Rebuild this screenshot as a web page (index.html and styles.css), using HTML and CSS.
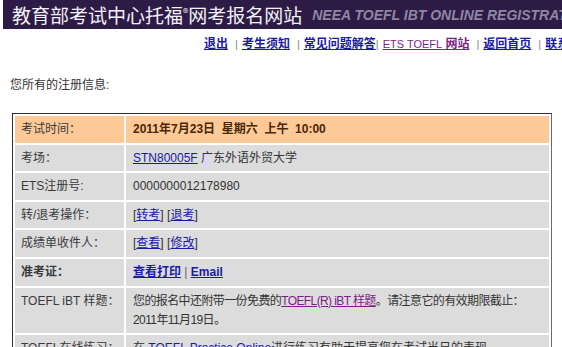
FILE: index.html
```html
<!DOCTYPE html>
<html lang="zh-CN">
<head>
    <meta charset="UTF-8">
    <title>教育部考试中心托福网考报名网站</title>
    <link rel="stylesheet" href="styles.css">
</head>
<body>
    <div class="banner">
        <span class="banner-title">教育部考试中心托福<sup>®</sup>网考报名网站</span>
        <span class="banner-sub">NEEA TOEFL IBT ONLINE REGISTRATION</span>
    </div>
    <div class="nav">
        <a href="#">退出</a><span class="sep">|</span><a href="#">考生须知</a><span class="sep">|</span><a href="#">常见问题解答</a><span class="sep tight">|</span><a href="#" class="visited"><span class="light">ETS TOEFL</span> 网站</a><span class="sep">|</span><a href="#">返回首页</a><span class="sep">|</span><a href="#">联系我们</a>
    </div>
    <p class="intro">您所有的注册信息:</p>
    <table class="info">
        <tr class="head">
            <td class="label">考试时间：</td>
            <td class="value">2011年7月23日&nbsp; 星期六&nbsp; 上午&nbsp; 10:00</td>
        </tr>
        <tr>
            <td class="label">考场：</td>
            <td class="value"><a href="#">STN80005F</a> 广东外语外贸大学</td>
        </tr>
        <tr>
            <td class="label">ETS注册号:</td>
            <td class="value">0000000012178980</td>
        </tr>
        <tr>
            <td class="label">转/退考操作：</td>
            <td class="value">[<a href="#">转考</a>] [<a href="#">退考</a>]</td>
        </tr>
        <tr>
            <td class="label">成绩单收件人：</td>
            <td class="value">[<a href="#">查看</a>] [<a href="#">修改</a>]</td>
        </tr>
        <tr>
            <td class="label strong">准考证：</td>
            <td class="value"><a href="#" class="strong">查看打印</a> <span class="pipe">|</span> <a href="#" class="strong">Email</a></td>
        </tr>
        <tr class="sample">
            <td class="label">TOEFL iBT 样题：</td>
            <td class="value">您的报名中还附带一份免费的<a href="#" class="visited">TOEFL(R) iBT 样题</a>。请注意它的有效期限截止：<br>2011年11月19日。</td>
        </tr>
        <tr>
            <td class="label">TOEFL在线练习：</td>
            <td class="value">在 <a href="#">TOEFL Practice Online</a>进行练习有助于提高您在考试当日的表现。</td>
        </tr>
    </table>
</body>
</html>
```

FILE: styles.css
```css
html, body {
    overflow: hidden;
}
body {
    margin: 0;
    font-family: "Liberation Sans", "Noto Sans CJK SC", sans-serif;
    font-size: 12px;
    color: #333;
    background-color: #fff;
}
a {
    color: #1a1aa8;
    text-decoration: underline;
}
a.visited {
    color: #7b1f86;
}
.banner {
    margin-left: 3px;
    height: 29px;
    padding-left: 9px;
    display: flex;
    align-items: center;
    white-space: nowrap;
    background-color: #2d1b46;
}
.banner-title {
    font-family: "Noto Sans CJK SC", sans-serif;
    font-size: 19px;
    line-height: 29px;
    color: #f4f2f8;
}
.banner-title sup {
    font-size: 11px;
    line-height: 0;
    vertical-align: 6px;
}
.banner-sub {
    margin-left: 10px;
    font: italic bold 14px "Liberation Sans", sans-serif;
    color: #8e86a3;
}
.nav {
    margin-top: 7px;
    padding-left: 204px;
    line-height: 16px;
    white-space: nowrap;
    font-weight: bold;
}
.nav .light {
    font-weight: normal;
    font-size: 11px;
}
.sep {
    margin: 0 4px 0 7px;
    color: #888;
    font-weight: normal;
    font-size: 11px;
}
.sep.tight {
    margin: 0 4px 0 0;
}
.intro {
    margin: 25px 0 0;
    padding-left: 10px;
    line-height: 16px;
}
.info {
    margin: 20px 0 0 12px;
    width: 540px;
    table-layout: fixed;
    border: 1px solid #2e2e2e;
    border-right-color: #6a6a6a;
    border-spacing: 2px;
}
.info td {
    padding: 4px 7px;
    line-height: 18.6px;
    background-color: #dcdcdc;
    vertical-align: top;
    white-space: nowrap;
}
.info td.label {
    box-sizing: border-box;
    width: 109px;
    padding-left: 6px;
    color: #3a3a3a;
}
.info .head td {
    background-color: #fdca97;
}
.info .head td.value {
    font-weight: bold;
    color: #4a2608;
}
.info .sample td {
    line-height: 19px;
    padding-bottom: 3px;
}
.info .sample td.value {
    letter-spacing: -0.6px;
}
.strong {
    font-weight: bold;
}
.pipe {
    color: #666;
}
```
